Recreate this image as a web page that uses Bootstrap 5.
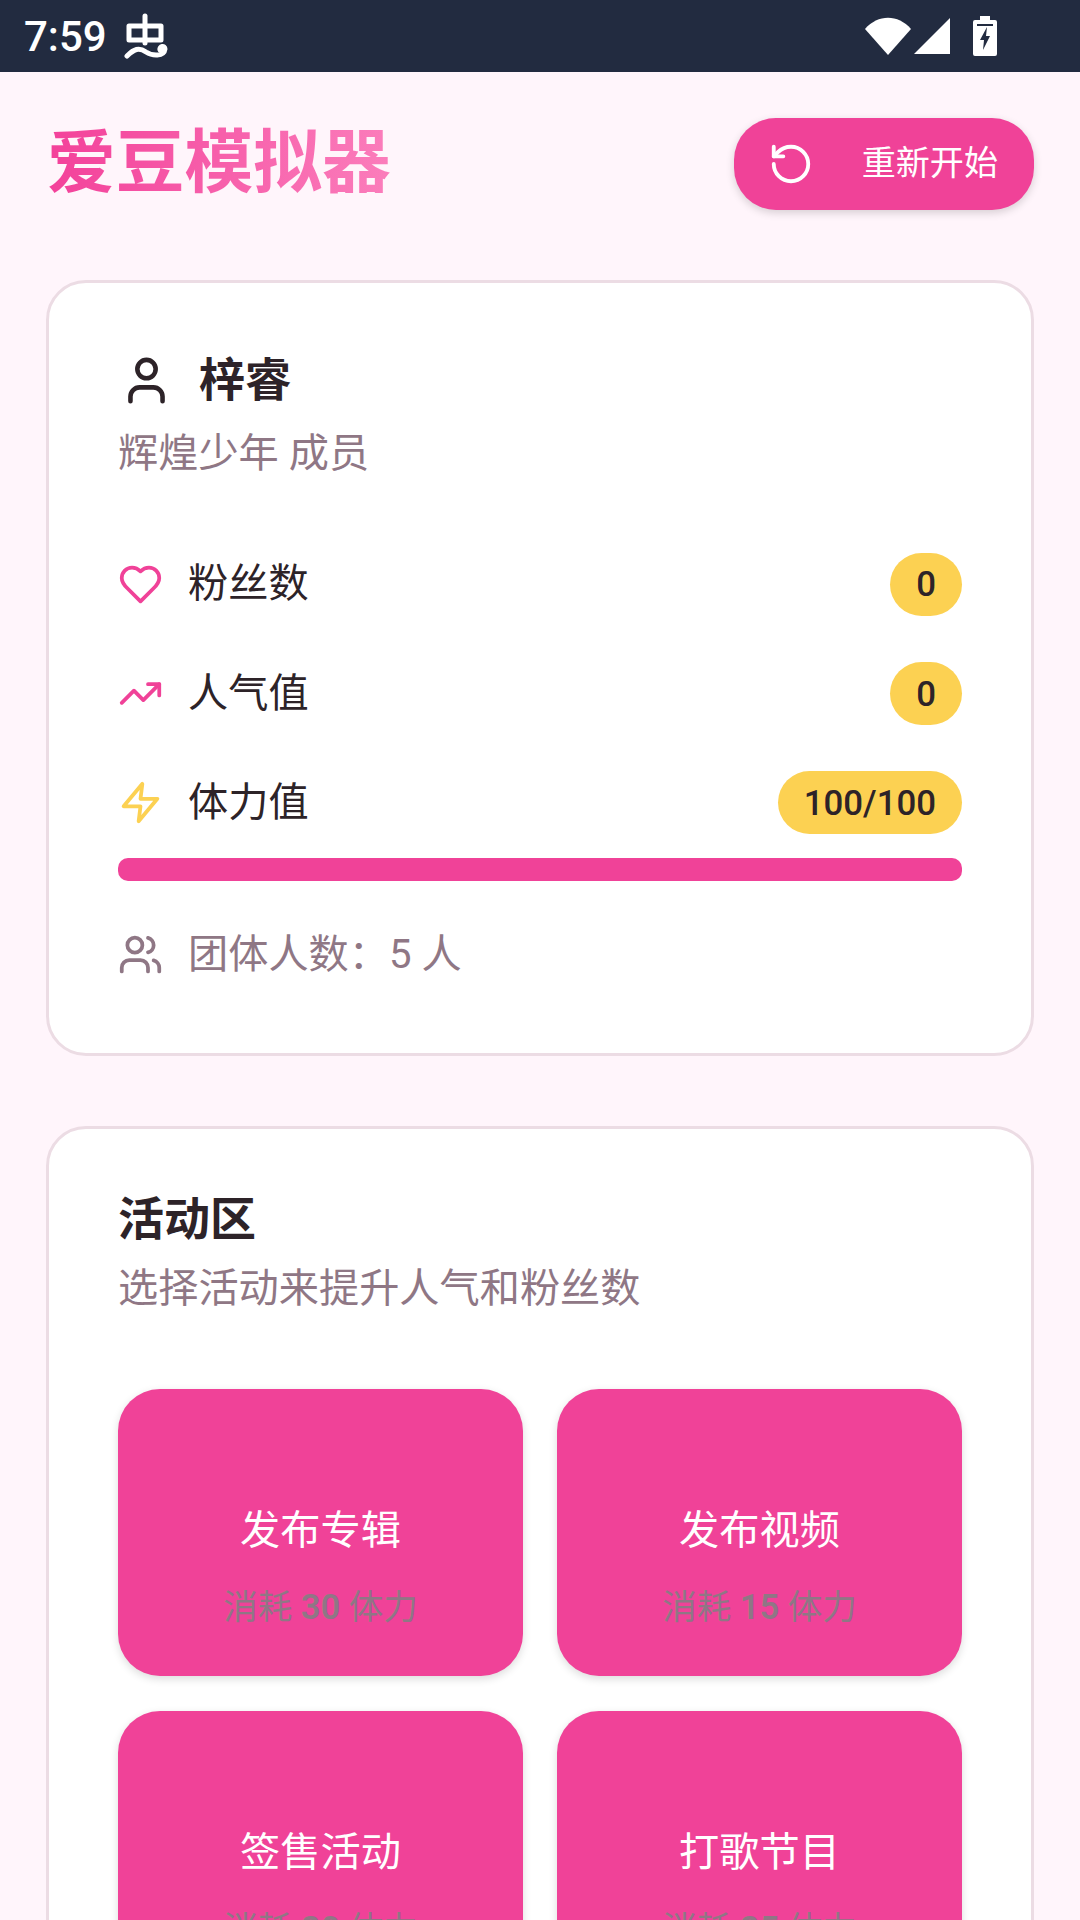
<!DOCTYPE html>
<html lang="zh">
<head>
  <meta charset="UTF-8">
  <title>爱豆模拟器</title>
  <meta name="viewport" content="width=device-width, initial-scale=1.0">
  <link href="https://cdn.jsdelivr.net/npm/bootstrap@5.3.0/dist/css/bootstrap.min.css" rel="stylesheet">
  <style>
    html, body { height: 1920px; overflow: hidden; }
    body { background-color: #fff5fb; color: #2d2328; font-family: Roboto, "Noto Sans CJK SC", sans-serif; }
    .status-strip { height: 72px; background: #222b40; color: #fff; padding: 0 0 0 24px; font-size: 42px; font-weight: 500; }
    .status-time { width: 84px; }
    .status-right { padding-right: 83px; gap: 2px; }
    .batt-icon { margin-left: 20px; }
    .page-wrap { padding: 46px 46px 0 46px; }
    .app-title { font-size: 68.75px; font-weight: 700; line-height: 92px; margin: 0 0 0 1px; background: linear-gradient(90deg, #f3419a, #fb7dbb); -webkit-background-clip: text; background-clip: text; color: transparent; }
    .restart-btn { width: 300px; height: 92px; background: #f04298; color: #fff; border: 0; border-radius: 42px; font-size: 34.1px; box-shadow: 0 3px 8px rgba(0,0,0,.16); padding: 0 36px 0 34px; }
    .restart-btn:hover { background: #f04298; color: #fff; }
    .panel { background: #fff; border: 3px solid #ecdce4; border-radius: 40px; padding: 60px 69px 0; margin-top: 70px; }
    .panel-one { height: 776px; padding-top: 67px; }
    .name-line { font-size: 46px; font-weight: 700; line-height: 60px; gap: 25px; }
    .name-icon { margin-left: 1px; }
    .sub-line { font-size: 40.2px; color: #8f7785; line-height: 56px; margin-top: 16px; }
    .panel-title + .sub-line { margin-top: 12px; }
    .stat-list { margin-top: 71px; }
    .stat-row { height: 63px; margin-bottom: 46.2px; font-size: 40.2px; }
    .stat-left { gap: 25px; }
    .yellow-pill { height: 63px; min-width: 71px; padding: 0 26px; background: #fcd152; border-radius: 32px; font-size: 34.8px; font-weight: 500; color: #2d2328; }
    .stat-bar { height: 23px; background: #f04298; border-radius: 10px; margin-top: -23px; }
    .team-row { margin-top: 46px; font-size: 40.2px; color: #8f7785; gap: 25px; line-height: 56px; }
    .panel-title { font-size: 46px; font-weight: 700; line-height: 60px; }
    .tile-grid { display: grid; grid-template-columns: 405px 405px; column-gap: 34px; row-gap: 35px; margin-top: 71.5px; }
    .act-tile { height: 287px; background: #f04298; border-radius: 42px; box-shadow: 0 3px 8px rgba(0,0,0,.14); padding-top: 114px; }
    .act-name { color: #fff; font-size: 40.2px; line-height: 56px; }
    .act-cost { color: #8f7785; font-size: 34.5px; line-height: 48px; margin-top: 24px; }
    .cost-num { font-weight: 600; }
  </style>
</head>
<body>

<div class="status-strip d-flex align-items-center justify-content-between">
  <div class="d-flex align-items-center gap-3">
    <span class="status-time">7:59</span>
    <svg width="44" height="46" viewBox="0 0 44 46" fill="none" stroke="#fff" stroke-width="5" stroke-linecap="round" stroke-linejoin="round">
      <path d="M21 3V30"/><path d="M5 13H37V27H5Z"/><path d="M3 43C10 36 15 34 22 39C28 43 40 44 41 36C41 32 35 33 36 37"/>
    </svg>
  </div>
  <div class="status-right d-flex align-items-center">
    <svg width="46" height="38" viewBox="0 0 46 38"><path fill="#fff" d="M0 12C13 -3 33 -3 46 12L23 38Z"/></svg>
    <svg width="38" height="38" viewBox="0 0 38 38"><path fill="#fff" d="M37 1V37H1Z"/></svg>
    <svg class="batt-icon" width="24" height="40" viewBox="0 0 24 40"><path fill="#fff" d="M7 0H17V4H22Q24 4 24 6V38Q24 40 22 40H2Q0 40 0 38V6Q0 4 2 4H7Z"/><path fill="#222b40" d="M4 8H20V10H4ZM14 11L7 24H11L10 34L17 20H13Z"/></svg>
  </div>
</div>

<div class="page-wrap">
  <div class="d-flex align-items-center justify-content-between">
    <h1 class="app-title">爱豆模拟器</h1>
    <button class="restart-btn btn d-flex align-items-center justify-content-between">
      <svg width="46" height="46" viewBox="0 0 24 24" fill="none" stroke="#fff" stroke-width="2" stroke-linecap="round" stroke-linejoin="round"><path d="M3 12a9 9 0 1 0 9-9 9.75 9.75 0 0 0-6.74 2.74L3 8"/><path d="M3 3v5h5"/></svg>
      <span>重新开始</span>
    </button>
  </div>

  <div class="panel panel-one">
    <div class="name-line d-flex align-items-center">
      <svg class="name-icon" width="55" height="55" viewBox="0 0 24 24" fill="none" stroke="#2d2328" stroke-width="2" stroke-linecap="round" stroke-linejoin="round"><path d="M19 21v-2a4 4 0 0 0-4-4H9a4 4 0 0 0-4 4v2"/><circle cx="12" cy="7" r="4"/></svg>
      <span>梓睿</span>
    </div>
    <div class="sub-line">辉煌少年 成员</div>

    <div class="stat-list">
      <div class="stat-row d-flex align-items-center justify-content-between">
        <div class="stat-left d-flex align-items-center">
          <svg width="45" height="45" viewBox="0 0 24 24" fill="none" stroke="#f04298" stroke-width="2" stroke-linecap="round" stroke-linejoin="round"><path d="M19 14c1.49-1.46 3-3.21 3-5.5A5.5 5.5 0 0 0 16.5 3c-1.76 0-3 .5-4.5 2-1.5-1.5-2.74-2-4.5-2A5.5 5.5 0 0 0 2 8.5c0 2.3 1.5 4.05 3 5.5l7 7Z"/></svg>
          <span>粉丝数</span>
        </div>
        <span class="yellow-pill d-flex align-items-center justify-content-center">0</span>
      </div>
      <div class="stat-row d-flex align-items-center justify-content-between">
        <div class="stat-left d-flex align-items-center">
          <svg width="45" height="45" viewBox="0 0 24 24" fill="none" stroke="#f04298" stroke-width="2" stroke-linecap="round" stroke-linejoin="round"><path d="M22 7 13.5 15.5 8.5 10.5 2 17"/><path d="M16 7h6v6"/></svg>
          <span>人气值</span>
        </div>
        <span class="yellow-pill d-flex align-items-center justify-content-center">0</span>
      </div>
      <div class="stat-row d-flex align-items-center justify-content-between">
        <div class="stat-left d-flex align-items-center">
          <svg width="45" height="45" viewBox="0 0 24 24" fill="none" stroke="#fcd152" stroke-width="2" stroke-linecap="round" stroke-linejoin="round"><path d="M13 2 3 14h9l-1 8 10-12h-9l1-8Z"/></svg>
          <span>体力值</span>
        </div>
        <span class="yellow-pill d-flex align-items-center justify-content-center">100/100</span>
      </div>
      <div class="stat-bar"></div>
    </div>

    <div class="team-row d-flex align-items-center">
      <svg width="45" height="45" viewBox="0 0 24 24" fill="none" stroke="#8f7785" stroke-width="2" stroke-linecap="round" stroke-linejoin="round"><path d="M16 21v-2a4 4 0 0 0-4-4H6a4 4 0 0 0-4 4v2"/><circle cx="9" cy="7" r="4"/><path d="M22 21v-2a4 4 0 0 0-3-3.87"/><path d="M16 3.13a4 4 0 0 1 0 7.75"/></svg>
      <span>团体人数：5 人</span>
    </div>
  </div>

  <div class="panel">
    <div class="panel-title">活动区</div>
    <div class="sub-line">选择活动来提升人气和粉丝数</div>
    <div class="tile-grid">
      <div class="act-tile text-center"><div class="act-name">发布专辑</div><div class="act-cost">消耗 <span class="cost-num">30</span> 体力</div></div>
      <div class="act-tile text-center"><div class="act-name">发布视频</div><div class="act-cost">消耗 <span class="cost-num">15</span> 体力</div></div>
      <div class="act-tile text-center"><div class="act-name">签售活动</div><div class="act-cost">消耗 <span class="cost-num">20</span> 体力</div></div>
      <div class="act-tile text-center"><div class="act-name">打歌节目</div><div class="act-cost">消耗 <span class="cost-num">25</span> 体力</div></div>
    </div>
  </div>
</div>

</body>
</html>
